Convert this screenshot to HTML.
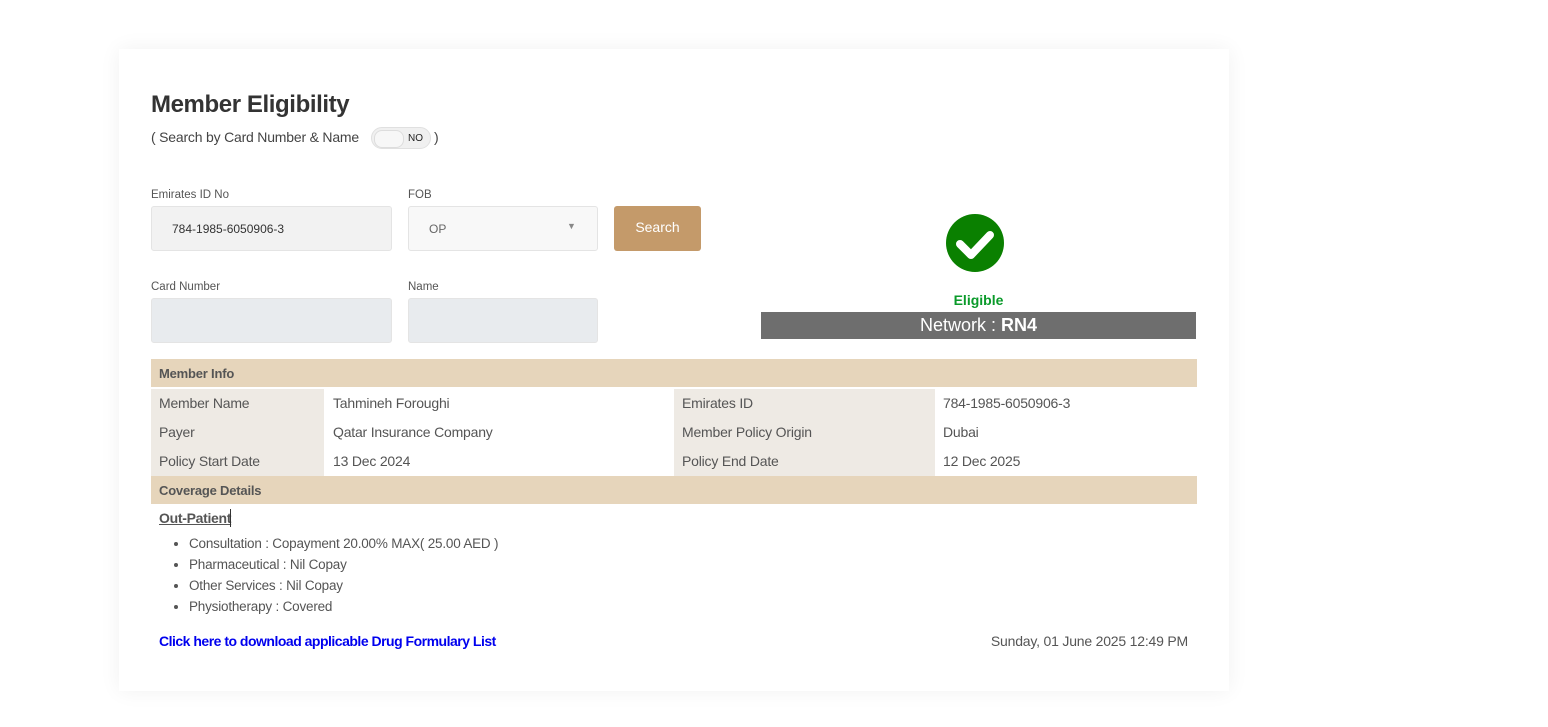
<!DOCTYPE html>
<html><head><style>
body{margin:0;width:1548px;height:727px;background:#fff;font-family:"Liberation Sans",sans-serif;position:relative;overflow:hidden}
.card{position:absolute;left:119px;top:49px;width:1110px;height:642px;background:#fff;box-shadow:0 0 20px rgba(0,0,0,0.06)}
.a{position:absolute;white-space:nowrap}
.lbl{font-size:11.5px;color:#555}
.in{position:absolute;border:1px solid #e4e4e4;border-radius:3px;box-sizing:border-box}
.row{position:absolute;left:151px;width:1046px;height:29px;font-size:14px;color:#555;letter-spacing:-0.2px}
.row div{position:absolute;top:0;height:29px;line-height:29px;padding-left:8px;box-sizing:border-box}
.c1{left:0;width:173px;background:#eeeae4}.c2{left:174px;width:348px}.c3{left:523px;width:261px;background:#eeeae4}.c4{left:784px;width:262px}
.hd{position:absolute;left:151px;width:1046px;height:28px;background:#e6d5bb;font-size:13px;font-weight:bold;color:#555;line-height:29px;padding-left:8px;box-sizing:border-box;letter-spacing:-0.2px}
li{font-size:13.5px;color:#555;height:21px;line-height:21px;letter-spacing:-0.2px}
</style></head><body>
<div class="card"></div>
<div class="a" style="left:151px;top:91px;font-size:24px;font-weight:bold;color:#333;letter-spacing:-0.4px">Member Eligibility</div>
<div class="a" style="left:151px;top:129px;font-size:14px;color:#444;letter-spacing:-0.2px">( Search by Card Number &amp; Name</div>
<div class="a" style="left:371px;top:127px;width:60px;height:22px;background:#f0f0f0;border-radius:11px;border:1px solid #e0e0e0;box-sizing:border-box"><div style="position:absolute;left:2px;top:2px;width:28px;height:16px;border-radius:8px;background:#f7f7f7;border:1px solid #ddd"></div><span style="position:absolute;left:36px;top:5px;font-size:10px;color:#222">NO</span></div>
<div class="a" style="left:434px;top:129px;font-size:14px;color:#444">)</div>
<div class="a lbl" style="left:151px;top:189px">Emirates ID No</div>
<div class="a lbl" style="left:408px;top:189px">FOB</div>
<div class="in" style="left:151px;top:206px;width:241px;height:45px;background:#f2f2f2"><span class="a" style="left:20px;top:15px;font-size:12px;color:#333">784-1985-6050906-3</span></div>
<div class="in" style="left:408px;top:206px;width:190px;height:45px;background:#f8f8f8"><span class="a" style="left:20px;top:15px;font-size:12px;color:#666">OP</span><span class="a" style="left:158px;top:14px;font-size:9px;color:#888">▼</span></div>
<div class="a" style="left:614px;top:206px;width:87px;height:45px;background:#c49a6a;border-radius:3px;color:#fff;font-size:14px;text-align:center;line-height:43px">Search</div>
<div class="a lbl" style="left:151px;top:281px">Card Number</div>
<div class="a lbl" style="left:408px;top:281px">Name</div>
<div class="in" style="left:151px;top:298px;width:241px;height:45px;background:#e8ebee"></div>
<div class="in" style="left:408px;top:298px;width:190px;height:45px;background:#e8ebee"></div>
<svg class="a" style="left:945px;top:213px" width="60" height="60" viewBox="0 0 60 60"><circle cx="30" cy="30" r="29" fill="#0a8000"/><path d="M15 31 L26 42 L45 22" fill="none" stroke="#fff" stroke-width="8" stroke-linecap="round" stroke-linejoin="round"/></svg>
<div class="a" style="left:760px;width:437px;top:292px;text-align:center;color:#0a9a2a;font-size:14px;font-weight:bold">Eligible</div>
<div class="a" style="left:761px;top:312px;width:435px;height:27px;background:#6e6e6e;color:#fff;font-size:18px;text-align:center;line-height:27px">Network : <b>RN4</b></div>
<div class="hd" style="top:359px">Member Info</div>
<div class="row" style="top:389px"><div class="c1">Member Name</div><div class="c2">Tahmineh Foroughi</div><div class="c3">Emirates ID</div><div class="c4">784-1985-6050906-3</div></div>
<div class="row" style="top:418px"><div class="c1">Payer</div><div class="c2">Qatar Insurance Company</div><div class="c3">Member Policy Origin</div><div class="c4">Dubai</div></div>
<div class="row" style="top:447px"><div class="c1">Policy Start Date</div><div class="c2">13 Dec 2024</div><div class="c3">Policy End Date</div><div class="c4">12 Dec 2025</div></div>
<div class="hd" style="top:476px">Coverage Details</div>
<div class="a" style="left:159px;top:510px;font-size:14px;font-weight:bold;color:#555;text-decoration:underline;letter-spacing:-0.3px">Out-Patient</div>
<div class="a" style="left:230px;top:509px;width:1px;height:18px;background:#333"></div>
<ul class="a" style="left:151px;top:533px;margin:0;padding-left:38px">
<li>Consultation : Copayment 20.00% MAX( 25.00 AED )</li>
<li>Pharmaceutical : Nil Copay</li>
<li>Other Services : Nil Copay</li>
<li>Physiotherapy : Covered</li>
</ul>
<div class="a" style="left:159px;top:633px;font-size:14px;font-weight:bold;color:#0000ee;letter-spacing:-0.5px">Click here to download applicable Drug Formulary List</div>
<div class="a" style="right:360px;top:633px;font-size:14px;color:#555;letter-spacing:-0.2px">Sunday, 01 June 2025 12:49 PM</div>
</body></html>
